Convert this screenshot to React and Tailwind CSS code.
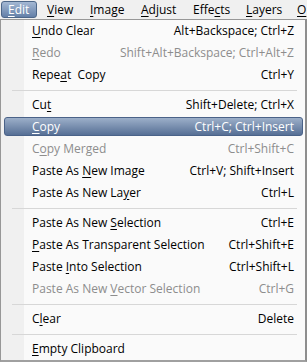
const menuBar = [
    { label: "&View", w: "w-[43px]" },
    { label: "&Image", w: "w-[51px]" },
    { label: "&Adjust", w: "w-[52px]" },
    { label: "Effe&cts", w: "w-[53px]" },
    { label: "&Layers", w: "w-[51px]" },
    { label: "&O", w: "w-[30px]" },
];

const items = [
    { label: "&Undo Clear", keys: "Alt+Backspace; Ctrl+Z" },
    { label: "&Redo", keys: "Shift+Alt+Backspace; Ctrl+Alt+Z", disabled: true },
    { label: "Repe&at  Copy", keys: "Ctrl+Y" },
    { sep: true },
    { label: "Cu&t", keys: "Shift+Delete; Ctrl+X" },
    { label: "&Copy", keys: "Ctrl+C; Ctrl+Insert", active: true },
    { label: "C&opy Merged", keys: "Ctrl+Shift+C", disabled: true },
    { label: "Paste As &New Image", keys: "Ctrl+V; Shift+Insert" },
    { label: "Paste As New La&yer", keys: "Ctrl+L" },
    { sep: true },
    { label: "Paste As New &Selection", keys: "Ctrl+E" },
    { label: "&Paste As Transparent Selection", keys: "Ctrl+Shift+E" },
    { label: "Paste &Into Selection", keys: "Ctrl+Shift+L" },
    { label: "Paste As New &Vector Selection", keys: "Ctrl+G", disabled: true },
    { sep: true },
    { label: "C&lear", keys: "Delete" },
    { sep: true },
    { label: "&Empty Clipboard", keys: "" },
];

// "&x" marks the mnemonic letter
const Label = ({ text }) => {
    const i = text.indexOf("&");
    if (i < 0) return <span>{text}</span>;
    return (
        <span className="whitespace-pre">
            {text.slice(0, i)}
            <span className="underline underline-offset-2">{text[i + 1]}</span>
            {text.slice(i + 2)}
        </span>
    );
};

const App = () => {
    return (
        <div className="w-[307px] h-[362px] overflow-hidden bg-[#f0f0f0] text-[12px] leading-none text-black font-['Open_Sans','Noto_Sans',sans-serif]">
            <div className="flex h-[19px] items-start pl-px pt-px overflow-hidden">
                <div className="flex shrink-0 h-[17px] w-[36px] items-center pl-[6px] rounded-[3px] border border-[#4d6789] bg-[linear-gradient(#a4b8d3,#6480a8)] text-white">
                    <Label text="&Edit" />
                </div>
                {menuBar.map((m) => (
                    <div key={m.label} className={`flex shrink-0 h-[17px] items-center pl-[10px] ${m.w}`}>
                        <Label text={m.label} />
                    </div>
                ))}
            </div>
            <div className="flex flex-col h-[343px] border-t border-l border-[#979797] border-r-2 border-b-2 border-r-[#8e8e8e] border-b-[#a0a0a0] bg-[linear-gradient(to_right,#f0f0f0_23px,#fafafa_23px)]">
                {items.map((it, idx) => {
                    if (it.sep)
                        return (
                            <div key={idx} className="flex h-[8px] items-center ml-[11px] mr-[8px]">
                                <div className="h-px w-full bg-[#d7d7d7]" />
                            </div>
                        );
                    if (it.active)
                        return (
                            <div key={idx} className="h-[22px] pt-[1px] pb-[2px] pl-[3px] pr-[2px]">
                                <div className="flex h-full items-center justify-between rounded-[3px] border border-[#4a6288] bg-[linear-gradient(#9cafc9,#566f95)] pl-[27px] pr-[8px] text-white">
                                    <Label text={it.label} />
                                    <span>{it.keys}</span>
                                </div>
                            </div>
                        );
                    return (
                        <div
                            key={idx}
                            className={`flex h-[22px] items-center justify-between pl-[31px] pr-[11px] ${it.disabled ? "text-[#8d8d8d]" : ""}`}
                        >
                            <Label text={it.label} />
                            <span>{it.keys}</span>
                        </div>
                    );
                })}
            </div>
        </div>
    );
};

export default App;
